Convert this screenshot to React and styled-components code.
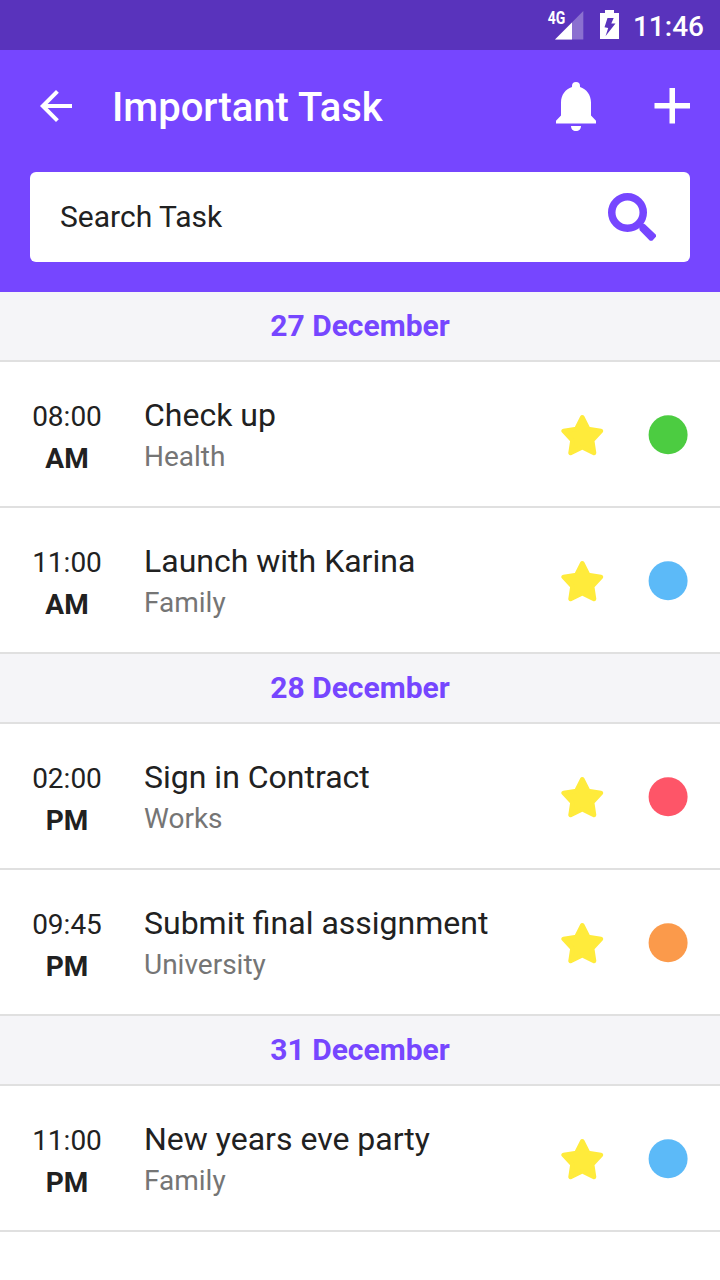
import React from 'react';
import styled, { createGlobalStyle } from 'styled-components';

const GlobalStyle = createGlobalStyle`
  * { box-sizing: border-box; }
  body { margin: 0; background: #fff; font-family: Roboto, sans-serif; color: #212121; }
`;

const Screen = styled.main`
  width: 720px;
  height: 1280px;
  overflow: hidden;
  background: #fff;
  display: flex;
  flex-direction: column;
`;

const StatusBar = styled.div`
  height: 50px;
  flex: none;
  display: flex;
  align-items: center;
  justify-content: flex-end;
  padding-right: 16px;
  background: #5933bc;
  color: #fff;
`;

const StatusIcons = styled.svg`
  width: 80px;
  height: 50px;
  margin-right: 13px;
`;

const Clock = styled.span`
  font-size: 28px;
  font-weight: 500;
  line-height: 32px;
  padding-top: 3px;
`;

const Header = styled.header`
  height: 242px;
  flex: none;
  background: #7646ff;
  color: #fff;
  padding: 0 30px 30px;
  display: flex;
  flex-direction: column;
`;

const TitleBar = styled.div`
  height: 122px;
  display: flex;
  align-items: center;
  padding-bottom: 10px;
  margin-right: -6px;
`;

const IconButton = styled.button`
  width: 48px;
  height: 56px;
  border: 0;
  padding: 0;
  background: none;
  color: inherit;
  display: flex;
  align-items: center;
  justify-content: center;
  margin-left: ${(p) => p.$gap || 0}px;

  svg { display: block; flex: none; }
`;

const Title = styled.h1`
  flex: 1;
  margin: 4px 0 0 32px;
  font-size: 40px;
  font-weight: 500;
  line-height: 48px;
`;

const SearchBox = styled.div`
  height: 90px;
  background: #fff;
  border-radius: 6px;
  display: flex;
  align-items: center;
  justify-content: space-between;
  padding: 0 30px;
  color: #212121;
  font-size: 30px;
  line-height: 36px;
`;

const DateHeading = styled.h2`
  height: 70px;
  flex: none;
  margin: 0;
  padding-top: 16px;
  border-bottom: 2px solid #e0e0e0;
  background: #f5f5f8;
  color: #7646ff;
  font-size: 30px;
  font-weight: 700;
  line-height: 36px;
  text-align: center;
`;

const Row = styled.article`
  height: 146px;
  flex: none;
  display: flex;
  align-items: center;
  border-bottom: 2px solid #e0e0e0;
  padding: 1px 32px 0 22px;
`;

const Time = styled.div`
  width: 90px;
  text-align: center;
  font-size: 28px;
  line-height: 42px;
  padding-top: 7px;
`;

const Period = styled.div`
  font-weight: 700;
`;

const Details = styled.div`
  flex: 1;
  margin-left: 32px;
  padding-top: 2px;
`;

const TaskName = styled.div`
  font-size: 32px;
  line-height: 42px;
`;

const Category = styled.div`
  font-size: 28px;
  line-height: 42px;
  color: #757575;
`;

const Star = styled.svg`
  width: 44px;
  height: 44px;
  margin-right: 44px;
`;

const Dot = styled.svg`
  width: 41px;
  height: 41px;
  margin: 0 -1px;
  fill: ${(p) => p.$color};
`;

const groups = [
  {
    date: '27 December',
    tasks: [
      { time: '08:00', period: 'AM', name: 'Check up', category: 'Health', color: '#4ccc41' },
      { time: '11:00', period: 'AM', name: 'Launch with Karina', category: 'Family', color: '#5cbaf8' },
    ],
  },
  {
    date: '28 December',
    tasks: [
      { time: '02:00', period: 'PM', name: 'Sign in Contract', category: 'Works', color: '#fe5568' },
      { time: '09:45', period: 'PM', name: 'Submit final assignment', category: 'University', color: '#fb9a4b' },
    ],
  },
  {
    date: '31 December',
    tasks: [
      { time: '11:00', period: 'PM', name: 'New years eve party', category: 'Family', color: '#5cbaf8' },
    ],
  },
];

function Task({ task }) {
  return (
    <Row>
      <Time>
        <div>{task.time}</div>
        <Period>{task.period}</Period>
      </Time>
      <Details>
        <TaskName>{task.name}</TaskName>
        <Category>{task.category}</Category>
      </Details>
      <Star viewBox="0 0 44 44" aria-label="Important">
        <path
          d="M21.3 4.4 L27.1 15.9 L39.9 18 L31.1 27.4 L33 39.9 L21.3 34.2 L9.6 39.9 L11.5 27.4 L2.7 18 L15.5 15.9 Z"
          fill="#ffeb3b"
          stroke="#ffeb3b"
          strokeWidth="4.6"
          strokeLinejoin="round"
        />
      </Star>
      <Dot viewBox="0 0 41 41" $color={task.color}>
        <circle cx="20.1" cy="20.8" r="19.5" />
      </Dot>
    </Row>
  );
}

export default function App() {
  return (
    <Screen>
      <GlobalStyle />
      <StatusBar>
        <StatusIcons viewBox="540 0 80 50">
          <text transform="translate(547.7 24) scale(.8 1)" fill="#fff" fontSize="17.5" fontWeight="700">4G</text>
          <path d="M583.3 11 V39.5 H555 Z" fill="#fff" fillOpacity=".3" />
          <path d="M572 22.4 V39.5 H555 Z" fill="#fff" />
          <path d="M605 10h9v3h5v26h-19V13h5z" fill="#fff" />
          <path d="M607.5 18H613.7L611.3 23.5H615.5L605.6 36L608.2 28L604.5 27.3Z" fill="#5933bc" />
        </StatusIcons>
        <Clock>11:46</Clock>
      </StatusBar>
      <Header>
        <TitleBar>
          <IconButton $gap={2} aria-label="Back">
            <svg width="48" height="48" viewBox="0 0 24 24">
              <path d="M20 11H7.83l5.59-5.59L12 4l-8 8 8 8 1.41-1.41L7.83 13H20v-2z" fill="currentColor" />
            </svg>
          </IconButton>
          <Title>Important Task</Title>
          <IconButton aria-label="Notifications">
            <svg width="48" height="56" viewBox="552 78 48 56">
              <path d="M572 87V86a4 4 0 0 1 8 0v1C586.5 89 591 95 591 102.5V115.5L596 120.8V123.5H556V120.8L561 115.5V102.5C561 95 565.5 89 572 87ZM571 126H581C581 129 579 131 576 131C573 131 571 129 571 126Z" fill="currentColor" />
            </svg>
          </IconButton>
          <IconButton $gap={48} aria-label="Add task">
            <svg width="48" height="56" viewBox="648 78 48 56">
              <path d="M654.5 105.8H690M672.25 88V123.5" stroke="currentColor" strokeWidth="5.5" />
            </svg>
          </IconButton>
        </TitleBar>
        <SearchBox>
          <span>Search Task</span>
          <svg width="56" height="60" viewBox="604 187 56 60">
            <circle cx="627.5" cy="212.5" r="15.75" fill="none" stroke="#7646ff" strokeWidth="7.5" />
            <path d="M641 225.5L643.5 224.7L645 225.6L655 235.3L655 236.4L651.8 239.7L650.4 239.7L640.6 229.9L640.3 228Z" fill="#7646ff" stroke="#7646ff" strokeWidth="2" strokeLinejoin="round" />
            <path d="M638 223L641 226" stroke="#7646ff" strokeWidth="4" />
          </svg>
        </SearchBox>
      </Header>
      {groups.map((group) => (
        <React.Fragment key={group.date}>
          <DateHeading>{group.date}</DateHeading>
          {group.tasks.map((task) => (
            <Task key={task.name} task={task} />
          ))}
        </React.Fragment>
      ))}
    </Screen>
  );
}
